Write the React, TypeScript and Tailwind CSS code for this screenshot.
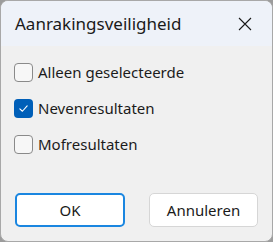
import React, { useState } from 'react';

function CheckRow({ label, checked, onToggle }: { label: string; checked: boolean; onToggle: () => void }) {
  return (
    <label className="flex items-center h-[36px] cursor-default" onClick={onToggle}>
      {checked ? (
        <span className="w-[19px] h-[19px] rounded-[4px] bg-[#005fb8] flex items-center justify-center">
          <svg width="11" height="11" viewBox="0 0 12 12" fill="none">
            <path d="M2 6.3 L4.8 9 L10 3.2" stroke="white" strokeWidth="1.2" strokeLinecap="round" strokeLinejoin="round" />
          </svg>
        </span>
      ) : (
        <span className="w-[19px] h-[19px] rounded-[4px] border border-[#8a8a8a] bg-[#f7f7f7]" />
      )}
      <span className="ml-[5px] text-[15px] text-[#1b1b1b]">{label}</span>
    </label>
  );
}

export default function App() {
  const [checks, setChecks] = useState([false, true, false]);

  const toggle = (i: number) => {
    setChecks(checks.map((c, j) => (j === i ? !c : c)));
  };

  const labels = ['Alleen geselecteerde', 'Nevenresultaten', 'Mofresultaten'];

  return (
    <div className="w-[273px] h-[242px] bg-[#9c9c9c]" style={{ fontFamily: '"Segoe UI", "Noto Sans", sans-serif' }}>
      <div className="w-full h-full rounded-[8px] border border-[#a8a8a8] overflow-hidden flex flex-col bg-[#f0f0f0]">
        {/* title bar */}
        <div className="h-[45px] bg-[#eef2f9] flex items-center justify-between pl-[14px] pr-[20px] shrink-0">
          <span className="text-[17px] text-[#1a1a1a]">Aanrakingsveiligheid</span>
          <svg width="14" height="14" viewBox="0 0 14 14">
            <path d="M1 1 L13 13 M13 1 L1 13" stroke="#1a1a1a" strokeWidth="1.1" />
          </svg>
        </div>

        <div className="flex flex-col pl-[13px] pt-[8px]">
          {labels.map((l, i) => (
            <CheckRow key={l} label={l} checked={checks[i]} onToggle={() => toggle(i)} />
          ))}
        </div>

        <div className="flex justify-between px-[14px] mt-auto mb-[14px]">
          <button className="w-[110px] h-[34px] rounded-[5px] border-2 border-[#1a86e0] bg-white text-[15px] text-[#1a1a1a]">
            OK
          </button>
          <button className="w-[109px] h-[34px] rounded-[5px] border border-[#d6d6d6] bg-white text-[15px] text-[#1a1a1a]">
            Annuleren
          </button>
        </div>
      </div>
    </div>
  );
}
